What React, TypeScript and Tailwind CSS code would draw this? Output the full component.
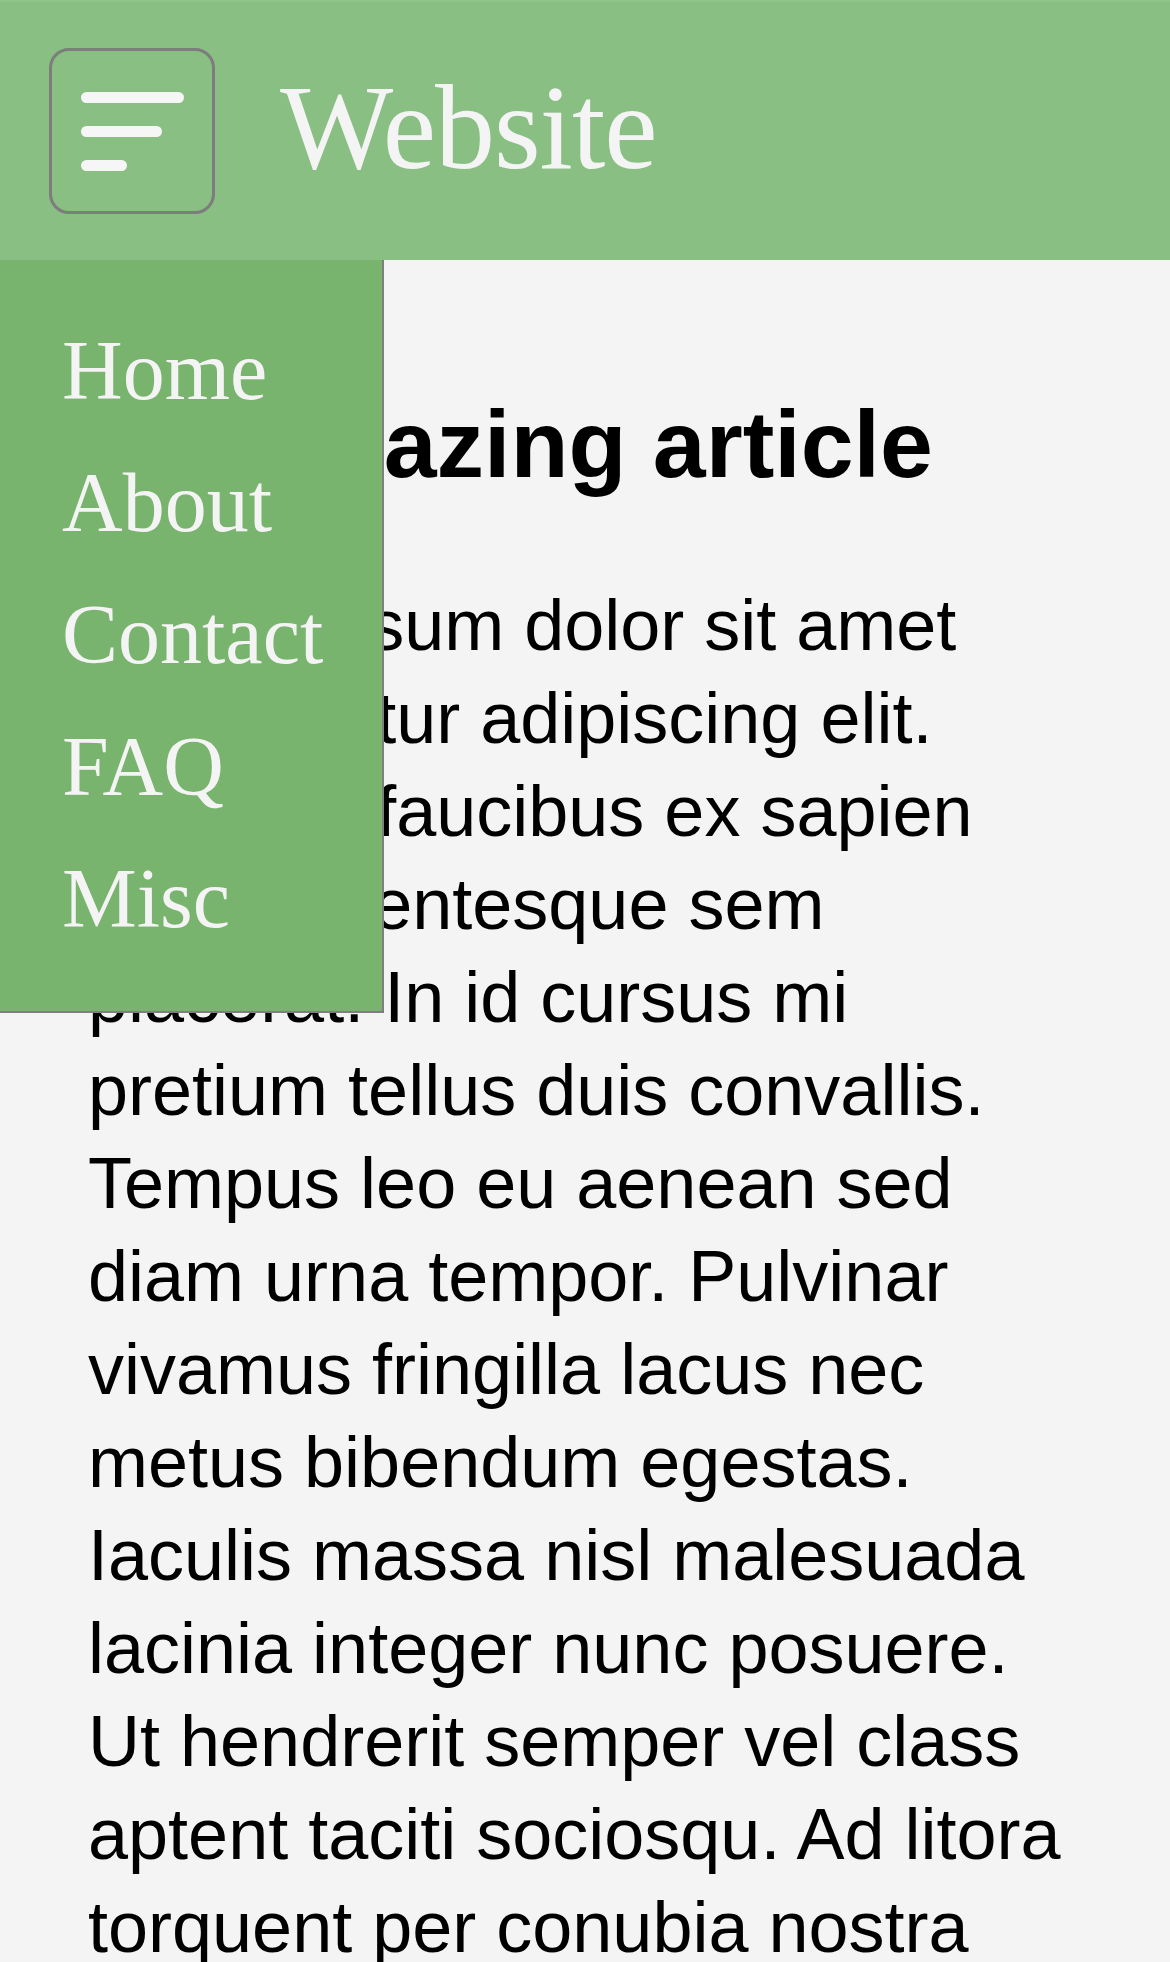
import React from 'react';

const menuItems = ['Home', 'About', 'Contact', 'FAQ', 'Misc'];

const bodyText =
  'Lorem ipsum dolor sit amet consectetur adipiscing elit. Quisque faucibus ex sapien vitae pellentesque sem placerat. In id cursus mi pretium tellus duis convallis. Tempus leo eu aenean sed diam urna tempor. Pulvinar vivamus fringilla lacus nec metus bibendum egestas. Iaculis massa nisl malesuada lacinia integer nunc posuere. Ut hendrerit semper vel class aptent taciti sociosqu. Ad litora torquent per conubia nostra inceptos himenaeos.';

const MenuButton: React.FC = () => (
  <button className="w-[166px] h-[166px] shrink-0 rounded-[20px] border-[3px] border-[#7d7d7d] flex items-center justify-center">
    <div className="w-[103px] flex flex-col gap-[23px]">
      <span className="block h-[11px] w-[103px] rounded-full bg-[#f6f6f6]" />
      <span className="block h-[11px] w-[81px] rounded-full bg-[#f6f6f6]" />
      <span className="block h-[11px] w-[46px] rounded-full bg-[#f6f6f6]" />
    </div>
  </button>
);

export default function App() {
  return (
    <div className="relative min-h-[1962px] bg-[#f4f4f4] overflow-hidden">
      {/* Header */}
      <header className="h-[260px] bg-[#89bf83] border-t-2 border-[#8ec689] flex items-center pl-[49px] gap-[65px]">
        <MenuButton />
        <span className="text-[120px] leading-none tracking-[-1px] text-[#f4f4f4] font-['Liberation_Serif',_serif] mt-[-6px]">
          Website
        </span>
      </header>

      {/* Article */}
      <main className="px-[88px] pt-[123px] text-black font-['Liberation_Sans',_Arial,_sans-serif]">
        <h1 className="text-[95px] font-bold leading-[1.3]">My amazing article</h1>
        <p className="mt-[72px] text-[72px] leading-[93px]">{bodyText}</p>
      </main>

      {/* Open navigation drawer */}
      <nav className="absolute left-0 top-[260px] w-[384px] bg-[#78b46d] border-r-2 border-b-2 border-[#7f7f7f] pt-[45px] pb-[46px] pl-[62px]">
        <ul className="flex flex-col">
          {menuItems.map((item) => (
            <li
              key={item}
              className="text-[84px] leading-[132px] text-[#f4f4f4] font-['Liberation_Serif',_serif]"
            >
              {item}
            </li>
          ))}
        </ul>
      </nav>
    </div>
  );
}
